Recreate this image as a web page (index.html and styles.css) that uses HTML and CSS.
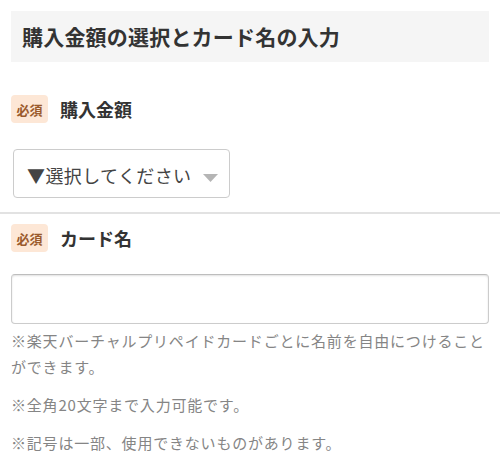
FILE: index.html
```html
<!DOCTYPE html>
<html lang="ja">
<head>
<meta charset="utf-8">
<link rel="stylesheet" href="styles.css">
</head>
<body>
<div class="page">
  <h2 class="section-title">購入金額の選択とカード名の入力</h2>

  <div class="field-head first">
    <span class="badge">必須</span>
    <span class="label">購入金額</span>
  </div>
  <div class="select">
    <span class="select-text">▼選択してください</span>
    <svg class="caret" width="15" height="8" viewBox="0 0 15 8"><polygon points="0,0 15,0 7.5,8" fill="#b5b5b5"/></svg>
  </div>

  <div class="divider"></div>

  <div class="field-head second">
    <span class="badge">必須</span>
    <span class="label">カード名</span>
  </div>
  <div class="text-input"></div>

  <p class="note first-note">※楽天バーチャルプリペイドカードごとに名前を自由につけることができます。</p>
  <p class="note">※全角20文字まで入力可能です。</p>
  <p class="note last-note">※記号は一部、使用できないものがあります。</p>
</div>
</body>
</html>
```

FILE: styles.css
```css
html, body {
  margin: 0;
  padding: 0;
  background: #ffffff;
}
body {
  font-family: "Noto Sans CJK JP", "Noto Sans", sans-serif;
  color: #333333;
}
.page {
  padding: 11px 11px 0 11px;
  overflow: hidden;
}
.section-title {
  margin: 0;
  height: 51px;
  display: flex;
  align-items: center;
  padding-left: 11px;
  background: #f5f5f5;
  font-size: 21px;
  letter-spacing: 0.2px;
  font-weight: 700;
  color: #333333;
  line-height: 1;
}
.field-head {
  display: flex;
  align-items: center;
  gap: 12px;
}
.field-head.first {
  margin-top: 33px;
}
.field-head.second {
  margin-top: 10px;
}
.badge {
  display: flex;
  align-items: center;
  justify-content: center;
  width: 37px;
  height: 28px;
  border-radius: 4px;
  background: #fde7d6;
  color: #9a5a2c;
  font-size: 13px;
  font-weight: 700;
  line-height: 1;
}
.label {
  font-size: 18px;
  font-weight: 700;
  color: #333333;
  line-height: 1;
}
.select {
  margin: 26px 0 0 2px;
  width: 217px;
  height: 49px;
  box-sizing: border-box;
  border: 1px solid #cccccc;
  border-radius: 4px;
  display: flex;
  align-items: center;
  padding-left: 13px;
  gap: 11px;
}
.select-text {
  font-size: 18px;
  letter-spacing: 0.4px;
  color: #444444;
  line-height: 1;
  margin-top: 2px;
}
.caret {
  margin-top: 9px;
}
.divider {
  margin: 14px -11px 0 -11px;
  height: 2px;
  background: #e2e2e2;
}
.text-input {
  margin-top: 22px;
  height: 50px;
  box-sizing: border-box;
  border: 1px solid #cccccc;
  border-top-color: #bdbdbd;
  border-radius: 4px;
  box-shadow: inset 0 1px 2px rgba(0, 0, 0, 0.12);
}
.note {
  margin: 12px 0 0 0;
  font-size: 15px;
  letter-spacing: 0.8px;
  line-height: 26px;
  color: #858585;
}
.note.first-note {
  margin-top: 4px;
}
```
